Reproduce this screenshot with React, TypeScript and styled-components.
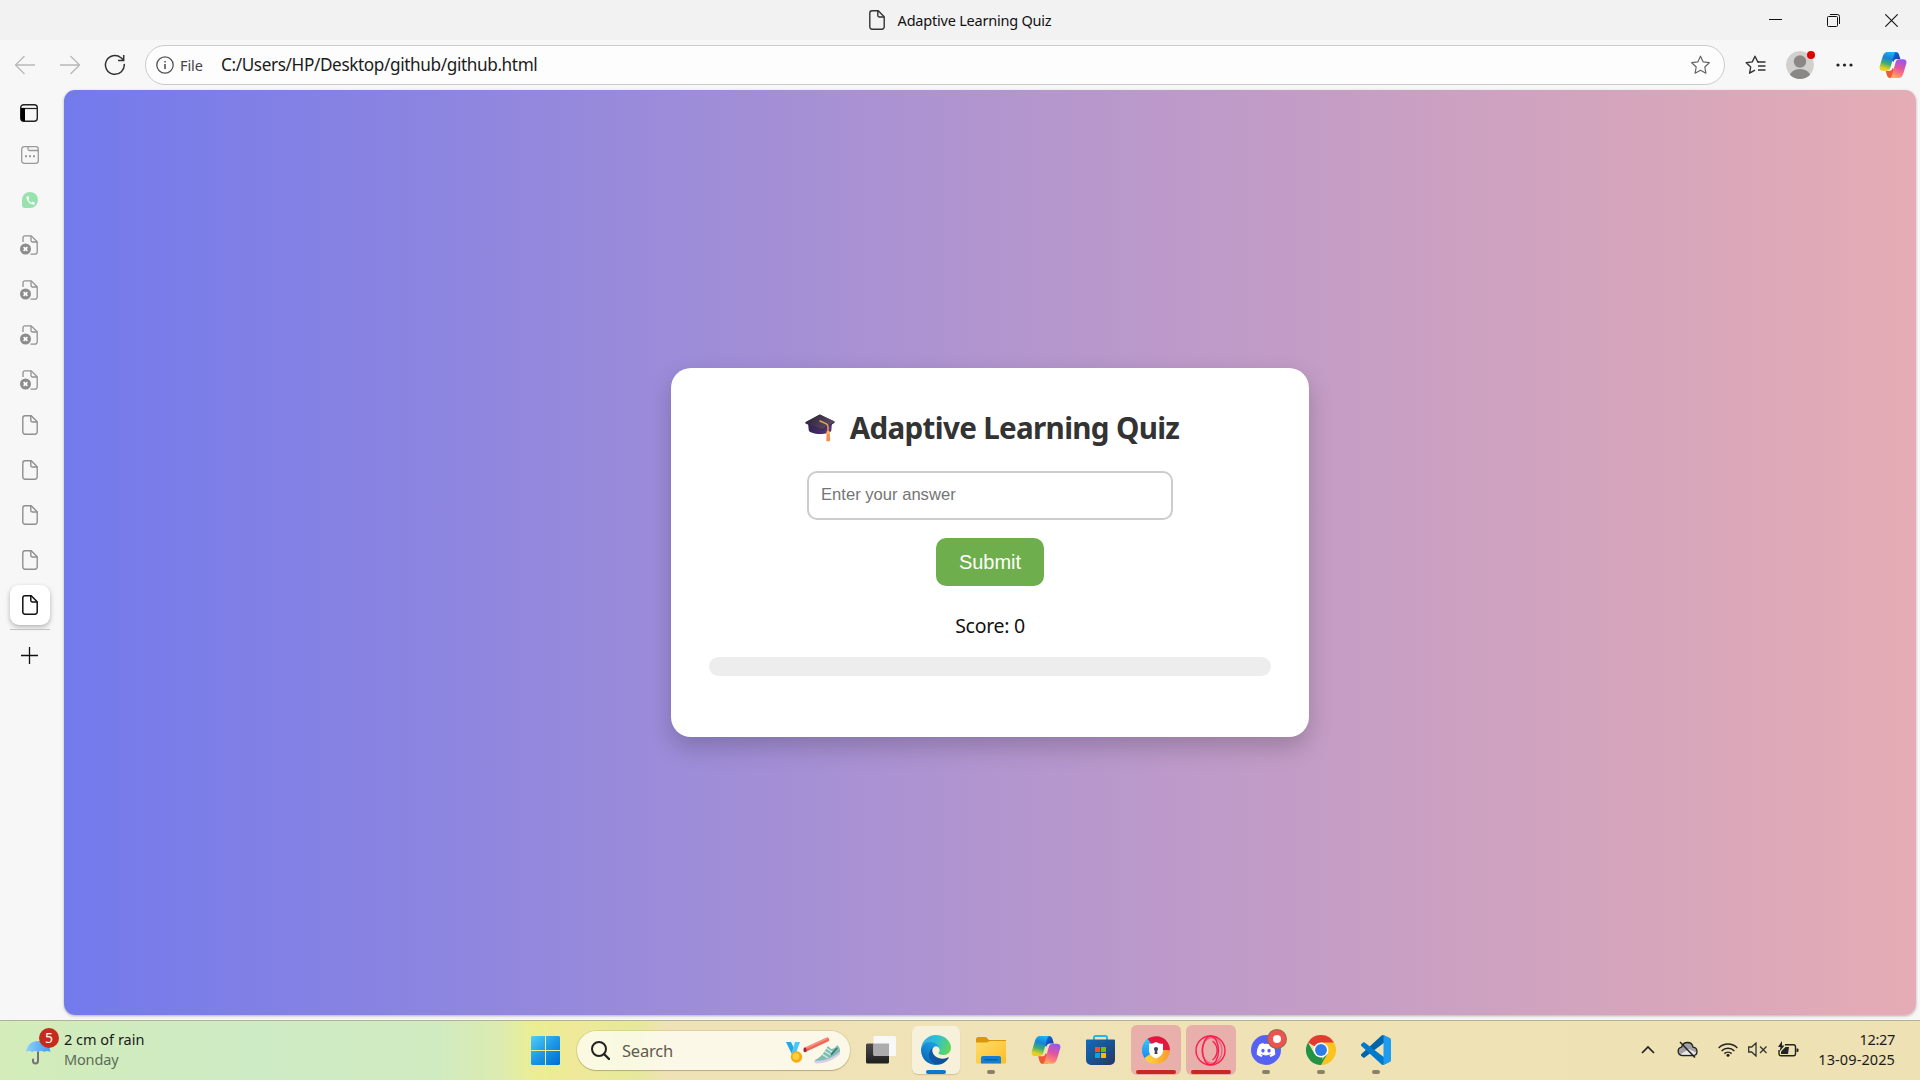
import React from "react";
import styled, { createGlobalStyle } from "styled-components";
import { FaDiscord } from "react-icons/fa";
import { MdCall } from "react-icons/md";

const ui = `"Noto Sans", "Open Sans", sans-serif`;

const GlobalStyle = createGlobalStyle`
  html, body { margin: 0; padding: 0; overflow: hidden; }
  * { box-sizing: border-box; }
  svg { display: block; flex: none; }
`;

const Screen = styled.div`
  width: 1920px;
  height: 1080px;
  display: flex;
  flex-direction: column;
  background: #f7f7f7;
  font-family: ${ui};
  overflow: hidden;
`;

const Label = styled.span<{ $size: number; $color?: string; $track?: number; $weight?: number; $line?: number }>`
  font-size: ${(p) => p.$size}px;
  color: ${(p) => p.$color ?? "#1b1b1b"};
  letter-spacing: ${(p) => p.$track ?? 0}px;
  font-weight: ${(p) => p.$weight ?? 400};
  line-height: ${(p) => p.$line ?? 20}px;
  white-space: nowrap;
`;

/* ---------- Title bar ---------- */

const TitleBar = styled.header`
  height: 40px;
  flex: none;
  background: #f2f2f2;
  display: grid;
  grid-template-columns: 1fr auto 1fr;
  align-items: center;
`;

const TabTitle = styled.div`
  display: flex;
  align-items: center;
  gap: 13px;
  grid-column: 2;
`;

const WindowControls = styled.div`
  display: flex;
  justify-content: flex-end;
`;

const WindowButton = styled.div`
  width: 58px;
  height: 40px;
  display: flex;
  align-items: center;
  justify-content: center;
`;

/* ---------- Toolbar ---------- */

const Toolbar = styled.nav`
  height: 50px;
  flex: none;
  display: flex;
  align-items: center;
  padding: 0 12px 0 14px;
`;

const NavButtons = styled.div`
  display: flex;
  align-items: center;
  gap: 24px;
  width: 131px;
`;

const AddressBar = styled.div`
  width: 1580px;
  height: 40px;
  border: 1px solid #cbcbcb;
  border-radius: 20px;
  background: #fdfdfd;
  display: flex;
  align-items: center;
  padding: 0 13px 0 10px;
`;

const SiteInfo = styled.div`
  display: flex;
  align-items: center;
  gap: 6px;
  width: 65px;
`;

const Url = styled.div`
  flex: 1;
  display: flex;
  padding-bottom: 1px;
`;

const ToolbarActions = styled.div`
  flex: 1;
  display: grid;
  grid-template-columns: 41px 50px 43px 28px;
  align-items: center;
  padding-left: 20px;
`;

/* ---------- Body ---------- */

const Body = styled.div`
  height: 930px;
  flex: none;
  display: flex;
`;

const SideTabs = styled.aside`
  width: 64px;
  flex: none;
  display: flex;
  flex-direction: column;
`;

const SideItem = styled.div<{ $h?: number; $shift?: number; $drop?: number }>`
  height: ${(p) => p.$h ?? 45}px;
  width: 60px;
  display: flex;
  align-items: center;
  justify-content: center;
  padding: ${(p) => p.$drop ?? 0}px ${(p) => p.$shift ?? 0}px 0 0;
`;

const ActiveTab = styled.div`
  width: 40px;
  height: 40px;
  border-radius: 9px;
  background: #fff;
  box-shadow: 0 2px 5px rgba(0, 0, 0, 0.28);
  display: flex;
  align-items: center;
  justify-content: center;
`;

const Divider = styled.div`
  width: 40px;
  height: 1px;
  margin: 2px 0 0 10px;
  background: #c4c4c4;
`;

const Page = styled.main`
  width: 1852px;
  height: 925px;
  border-radius: 11px;
  box-shadow: 0 1px 3px rgba(0, 0, 0, 0.28);
  background: linear-gradient(to right, #737aec 0%, #b295cf 50%, #e5acb4 100%);
  display: flex;
  align-items: center;
  justify-content: center;
`;

const Card = styled.section`
  width: 638px;
  height: 369px;
  border-radius: 20px;
  background: #fff;
  box-shadow: 0 10px 25px rgba(0, 0, 0, 0.2);
  padding: 38px;
  display: flex;
  flex-direction: column;
  align-items: center;
`;

const Heading = styled.h1`
  margin: 0;
  height: 44px;
  display: flex;
  align-items: center;
  gap: 15px;
  padding-left: 4px;
`;

const Answer = styled.input`
  width: 366px;
  height: 49px;
  margin-top: 21px;
  border: 2px solid #ccc;
  border-radius: 10px;
  padding: 0 12px 1px;
  outline: none;
  font: 16.6px "Liberation Sans", Arial, sans-serif;
  background: #fff;
  &::placeholder { color: #757575; opacity: 1; }
`;

const Submit = styled.button`
  width: 108px;
  height: 48px;
  margin-top: 18px;
  border: 0;
  border-radius: 10px;
  background: #6eae4c;
  color: #fff;
  padding: 0;
  font: 20px "Liberation Sans", Arial, sans-serif;
`;

const Score = styled.div`
  height: 30px;
  margin-top: 25px;
  display: flex;
  align-items: center;
`;

const Track = styled.div`
  width: 562px;
  height: 19px;
  margin-top: 16px;
  border-radius: 10px;
  background: #ededed;
`;

/* ---------- Taskbar ---------- */

const Taskbar = styled.footer`
  height: 60px;
  flex: none;
  border-top: 1px solid #b3b294;
  background: linear-gradient(to right, #d3ecb9 0, #cdebc5 260px, #d1ebc0 440px, #dcebb0 500px, #ebee92 535px, #efe999 575px, #e6e99b 635px, #f0e2b7 668px, #efe3b6 1300px, #eee1b4 1920px);
  display: flex;
`;

const Weather = styled.div`
  width: 517px;
  display: flex;
  padding: 7px 0 0 24px;
  gap: 4px;
`;

const Stack = styled.div<{ $end?: boolean; $top?: number }>`
  display: flex;
  flex-direction: column;
  align-items: ${(p) => (p.$end ? "flex-end" : "flex-start")};
  padding-top: ${(p) => p.$top ?? 0}px;
`;

const Apps = styled.div`
  display: flex;
  width: 1083px;
`;

const AppSlot = styled.div`
  width: 55px;
  height: 59px;
  display: flex;
  justify-content: center;
  padding-top: 4px;
`;

const AppTile = styled.div<{ $tone?: "active" | "alert" }>`
  width: ${(p) => (p.$tone === "alert" ? 50 : 48)}px;
  height: ${(p) => (p.$tone === "alert" ? 50 : 48)}px;
  margin-top: ${(p) => (p.$tone === "alert" ? 0 : 1)}px;
  border-radius: 6px;
  background: ${(p) => (p.$tone === "active" ? "#f7f1db" : p.$tone === "alert" ? "#e9afab" : "transparent")};
  box-shadow: ${(p) => (p.$tone === "active" ? "0 1px 1px rgba(90,80,40,.22)" : "none")};
  display: flex;
  flex-direction: column;
  align-items: center;
  justify-content: flex-end;
`;

const IconBox = styled.div`
  height: 34px;
  display: flex;
  align-items: center;
  justify-content: center;
`;

const Indicator = styled.div<{ $w: number; $c: string; $alert?: boolean }>`
  width: ${(p) => p.$w}px;
  height: 4px;
  margin: ${(p) => (p.$alert ? "3px 0 1px" : "3px 0 0")};
  border-radius: 2px;
  background: ${(p) => p.$c};
`;

const StartSlot = styled.div`
  width: 60px;
  display: flex;
  padding: 4px 0 0 4px;
  align-items: flex-start;
`;

const SearchBox = styled.div`
  width: 273px;
  height: 39px;
  margin: 10px 3px 0 0;
  border-radius: 20px;
  background: rgba(255, 255, 250, 0.74);
  box-shadow: 0 0 0 1px rgba(150, 140, 80, 0.2), 0 1px 1px rgba(90, 80, 40, 0.3);
  display: flex;
  align-items: center;
  padding: 0 8px 0 14px;
  gap: 12px;
`;

const SearchText = styled.div`
  flex: 1;
  display: flex;
`;

const Tray = styled.div`
  display: flex;
  align-items: flex-start;
  flex: 1;
  padding: 18px 25px 0 41px;
`;

const TrayIcons = styled.div`
  display: flex;
  height: 20px;
  align-items: center;
  flex: 1;
`;

const TrayIcon = styled.div<{ $gap: number }>`
  margin-right: ${(p) => p.$gap}px;
`;

const Clock = styled.div`
  margin-top: -10px;
`;

/* ---------- Drawings ---------- */

const DocIcon = ({ color = "#8f8f8f", width = 1.4 }: { color?: string; width?: number }) => (
  <svg width="16" height="20" viewBox="0 0 16 20" fill="none" stroke={color} strokeWidth={width}>
    <path d="M3 .8h6.2l6 6V17a2.2 2.2 0 0 1-2.2 2.2H3A2.2 2.2 0 0 1 .8 17V3A2.2 2.2 0 0 1 3 .8z" />
    <path d="M8.8 1v4.6c0 .9.5 1.4 1.4 1.4H15" />
  </svg>
);

const BrokenDocIcon = () => (
  <svg width="18" height="20" viewBox="0 0 18 20" fill="none" stroke="#929292" strokeWidth="1.3">
    <path d="M3 7V2.8A2 2 0 0 1 5 .8h6.2l6 6V17a2.2 2.2 0 0 1-2.2 2.2h-4.5" />
    <path d="M11 1v4.6c0 .9.5 1.4 1.4 1.4H17" />
    <circle cx="5.5" cy="14" r="5.5" fill="#8c8c8c" stroke="none" />
    <path d="M3.6 12.1l3.8 3.8m0-3.8l-3.8 3.8" stroke="#fff" strokeWidth="1.6" />
  </svg>
);

const CopilotIcon = ({ id, w = 29 }: { id: string; w?: number }) => (
  <svg width={w} height={w * 0.93} viewBox="0 0 28 26">
    <defs>
      <linearGradient id={`${id}a`} x1=".6" y1="0" x2=".35" y2="1">
        <stop offset="0" stopColor="#1bb4ee" /><stop offset=".32" stopColor="#1783d8" /><stop offset=".62" stopColor="#3fae70" /><stop offset=".9" stopColor="#e9cf1f" />
      </linearGradient>
      <linearGradient id={`${id}b`} x1=".65" y1="0" x2=".3" y2="1">
        <stop offset="0" stopColor="#9a55ee" /><stop offset=".45" stopColor="#e0569f" /><stop offset=".75" stopColor="#fb7b7b" /><stop offset="1" stopColor="#ffb35c" />
      </linearGradient>
      <linearGradient id={`${id}c`} x1="0" y1="0" x2="1" y2="1">
        <stop offset="0" stopColor="#1673dd" /><stop offset="1" stopColor="#1335a8" />
      </linearGradient>
    </defs>
    <path d="M12 0h4.6c2.2 0 3 1.200 3.600 3.200L21.300 7H18c-2.200 0-3 1-3.600 3L12 8z" fill={`url(#${id}c)`} />
    <path d="M16 26h-4.600c-2.200 0-3-1.200-3.600-3.200L6.700 19H10c2.200 0 3-1 3.600-3L16 18z" fill="#ee5a36" />
    <path d="M17 0H8.500C5.500 0 4.400 2.300 3.400 5.600L.9 13.800C-.2 17.100 1.200 18.700 3.900 18.700h3.900c2.400 0 3.100-1.300 3.800-3.600l3.100-10.800C15.300 2 15.800.2 17 0z" fill={`url(#${id}a)`} />
    <path d="M11 26h8.500c3 0 4.100-2.300 5.100-5.600l2.500-8.200c1.100-3.300-.3-4.900-3-4.900h-3.900c-2.400 0-3.100 1.300-3.800 3.600l-3.100 10.800c-.6 2.300-1.100 4.100-2.300 4.300z" fill={`url(#${id}b)`} />
  </svg>
);

const StarPath = "M10 1.200l2.700 5.700 6.100.8-4.500 4.300 1.100 6.200L10 15.200l-5.400 3 1.100-6.200L1.200 7.700l6.100-.8z";

const GradCap = () => (
  <svg width="30" height="28" viewBox="0 0 30 28">
    <defs>
      <linearGradient id="cap" x1="0" y1="0" x2="1" y2=".4"><stop offset="0" stopColor="#27222f" /><stop offset="1" stopColor="#5b4868" /></linearGradient>
      <linearGradient id="base" x1="0" y1="0" x2="1" y2="0"><stop offset="0" stopColor="#33234f" /><stop offset="1" stopColor="#5a3486" /></linearGradient>
    </defs>
    <path d="M3 9l.8 7.500c.3 1.500 5 3.500 11 3.500S26 18.500 26.300 16.500L27 9z" fill="url(#base)" />
    <path d="M14.800.4L29.600 7.500v1.200L17.500 16.500 .4 9.500V8.300z" fill="#3a2a4c" />
    <path d="M14.800.4L29.600 7.500 17.200 15.200.4 8.300z" fill="url(#cap)" />
    <path d="M15 7l6 2.600c1.600.8 2 1.600 2 3.200V19" fill="none" stroke="#e9a548" strokeWidth="1.500" strokeLinecap="round" />
    <path d="M21.700 18.500h3l.5 8c-.8 1.200-3.200 1.200-4 0z" fill="#f58d55" />
    <rect x="21.400" y="17" width="3.400" height="3" rx="1.200" fill="#ffb454" />
  </svg>
);

const Umbrella = () => (
  <svg width="36" height="38" viewBox="0 0 36 38">
    <defs><linearGradient id="umb" x1="0" y1="0" x2="1" y2="0"><stop offset="0" stopColor="#8fd0fb" /><stop offset="1" stopColor="#3f9bee" /></linearGradient></defs>
    <path d="M14 23v10a2.500 2.500 0 0 1-5 0v-1.500" fill="none" stroke="#77707c" strokeWidth="2" strokeLinecap="round" />
    <path d="M2 24C3 17 7 13.500 14 13s11.500 4 12.500 11c-2.200-1.400-4.300-1.400-6.200 0-2-1.400-4.200-1.400-6.200 0-2-1.400-4-1.400-6 0-2-1.400-4-1.400-6.100 0z" fill="url(#umb)" />
    <circle cx="25" cy="10" r="10" fill="#c42b1c" />
    <text x="25" y="15" textAnchor="middle" fontSize="14" fill="#fff" fontFamily="Noto Sans">5</text>
  </svg>
);

const WindowsLogo = () => (
  <svg width="29" height="29" viewBox="0 0 29 29">
    <defs><linearGradient id="win" gradientUnits="userSpaceOnUse" x1="0" y1="0" x2="26" y2="29"><stop offset="0" stopColor="#4fd0fb" /><stop offset=".5" stopColor="#1f9ae6" /><stop offset="1" stopColor="#0071d2" /></linearGradient></defs>
    <path fill="url(#win)" d="M1 0h13v14H0V1zM15 0h13l1 1v13H15zM0 15h14v14H1l-1-1zM15 15h14v13l-1 1H15z" />
  </svg>
);

const SearchArt = () => (
  <svg width="57" height="30" viewBox="0 0 57 30">
    <path d="M1 6h5l5 10-4 2.500z" fill="#25a6e8" /><path d="M15 6H10L6.500 17l4 1.500z" fill="#4cc7f5" />
    <circle cx="11.500" cy="21" r="5.700" fill="#f6ab14" /><circle cx="11" cy="20.500" r="3.400" fill="#ffcf3e" />
    <path d="M19 12L42 1.500c1.600-.5 3 2.500 1.500 3.700L21 15.800z" fill="#ee675a" />
    <path d="M19 12L42 1.500l.8 1.400L20 13.500z" fill="#fb8f7f" />
    <ellipse cx="20" cy="13.900" rx="1.600" ry="2.300" fill="#9c2635" />
    <path d="M30 24c5-2 9-7 13-14l3 3c2 0 5-1.500 6-4l2 2c2 4 1 7-2 9-6 4-13 6.500-20 7-2 0-3-1.500-2-3z" fill="#7fbdb1" />
    <path d="M30 24.500c8 1 17-2 25-9v2.500c-6 6-15 9.500-23 9.500-2.500 0-3-1.500-2-3z" fill="#d9cce9" />
    <path d="M37 18l6 4m-4-7l7 4m-5-7l6 4" stroke="#d5efe7" strokeWidth="1.300" />
    <path d="M46 19l6-7" stroke="#36766f" strokeWidth="1.600" />
  </svg>
);

const TaskView = () => (
  <svg width="30" height="28" viewBox="0 0 30 28">
    <defs><linearGradient id="tv" x1="0" y1="0" x2="0" y2="1"><stop offset="0" stopColor="#4a4a4a" /><stop offset="1" stopColor="#1e1e1e" /></linearGradient></defs>
    <rect x="0" y="7.500" width="23" height="20" rx="1.500" fill="url(#tv)" />
    <rect x="7.500" y="0" width="22.500" height="20" rx="1.500" fill="#f8f8f8" />
    <path d="M7.500 7.500H23V20H9a1.500 1.500 0 0 1-1.500-1.500z" fill="#acacac" />
  </svg>
);

const EdgeLogo = () => (
  <svg width="30" height="30" viewBox="0 0 256 256">
    <defs>
      <linearGradient id="e1" x1=".2" y1="0" x2="1" y2="0"><stop offset="0" stopColor="#0c59a4" /><stop offset="1" stopColor="#114a8b" /></linearGradient>
      <linearGradient id="e2" x1=".8" y1=".2" x2=".3" y2="1"><stop offset="0" stopColor="#1b9de2" /><stop offset=".5" stopColor="#1382d0" /><stop offset="1" stopColor="#0562ac" /></linearGradient>
      <linearGradient id="e3" x1="0" y1=".4" x2="1" y2=".7"><stop offset="0" stopColor="#35a9e8" /><stop offset=".45" stopColor="#2dc2cf" /><stop offset="1" stopColor="#66d84e" /></linearGradient>
    </defs>
    <path fill="url(#e1)" d="M231 190.500c-3.400 1.800-6.900 3.400-10.500 4.700a101.700 101.700 0 0 1-35.900 6.400c-47.300 0-88.500-32.500-88.500-74.300a31.500 31.500 0 0 1 16.400-27.300c-42.800 1.800-53.800 46.400-53.800 72.500 0 74 68.100 81.400 82.800 81.400 7.900 0 19.800-2.300 27-4.600l1.300-.4a128.300 128.300 0 0 0 66.600-52.800 4 4 0 0 0-5.400-5.600z" />
    <path fill="url(#e2)" d="M105.700 241.400a79.200 79.200 0 0 1-22.700-21.300 80.700 80.700 0 0 1 29.500-120c3.200-1.500 8.500-4.100 15.600-4a32.400 32.400 0 0 1 25.700 13 31.900 31.900 0 0 1 6.300 18.700c0-.2 24.500-79.600-80-79.600-43.900 0-80 41.600-80 78.200a130.200 130.200 0 0 0 12.100 56 128 128 0 0 0 156.400 67 75.500 75.500 0 0 1-62.800-8z" />
    <path fill="url(#e3)" d="M152.300 148.900c-.9 1-3.400 2.500-3.400 5.600 0 2.600 1.700 5.200 4.800 7.300 14.300 10 41.400 8.600 41.500 8.600a59.600 59.600 0 0 0 30.300-8.300 61.400 61.400 0 0 0 30.400-52.900c.3-22.400-8-37.300-11.300-43.900C223.500 23.900 177.700 0 128 0A128 128 0 0 0 0 126.200c.5-36.500 36.800-66 80-66 3.500 0 23.500.3 42 10.100 16.300 8.600 24.900 18.900 30.800 29.200 6.200 10.700 7.300 24.100 7.300 29.500s-2.700 13.300-7.800 19.900z" />
  </svg>
);

const FolderIcon = () => (
  <svg width="30" height="27" viewBox="0 0 30 27">
    <defs><linearGradient id="fo" x1="0" y1="0" x2="1" y2="1"><stop offset="0" stopColor="#ffdc6b" /><stop offset="1" stopColor="#fcbd25" /></linearGradient></defs>
    <path d="M1.500 0H10l3 3h17v5H0V1.500z" fill="#d9980c" />
    <path d="M0 5.500h11L14 4h16v21.500a1 1 0 0 1-1 1H1a1 1 0 0 1-1-1z" fill="url(#fo)" />
    <path d="M5 26.500V21a2 2 0 0 1 2-2h16a2 2 0 0 1 2 2v5.500z" fill="#1180d2" />
    <path d="M8.500 22.800h13" stroke="#0b559b" strokeWidth="1.200" />
  </svg>
);

const StoreIcon = () => (
  <svg width="29" height="30" viewBox="0 0 29 30">
    <defs><linearGradient id="st" x1="0" y1="0" x2="1" y2="1"><stop offset="0" stopColor="#0f6cbd" /><stop offset="1" stopColor="#263763" /></linearGradient></defs>
    <path d="M8 6V2.500A1.500 1.500 0 0 1 9.500 1h10A1.500 1.500 0 0 1 21 2.500V6" fill="none" stroke="#22b8ee" strokeWidth="2" />
    <path d="M0 5.500a1 1 0 0 1 1-1h27a1 1 0 0 1 1 1V25a5 5 0 0 1-5 5H5a5 5 0 0 1-5-5z" fill="url(#st)" />
    <path d="M9 12h5v5H9z" fill="#f25022" /><path d="M15 12h5v5h-5z" fill="#7fba00" />
    <path d="M9 18h5v5H9z" fill="#00a4ef" /><path d="M15 18h5v5h-5z" fill="#ffb900" />
  </svg>
);

const ShieldBrowser = () => (
  <svg width="28" height="28" viewBox="0 0 28 28">
    <defs>
      <linearGradient id="sb1" x1="0" y1="0" x2="0" y2="1"><stop offset="0" stopColor="#37c9fa" /><stop offset="1" stopColor="#1b88f1" /></linearGradient>
      <linearGradient id="sb2" x1="0" y1="0" x2="1" y2="0"><stop offset="0" stopColor="#ffd93a" /><stop offset="1" stopColor="#f79b2d" /></linearGradient>
    </defs>
    <path d="M14 14L3 22.700A14 14 0 0 1 6.500 2.100z" fill="url(#sb1)" />
    <path d="M14 14L5.500 2.800C12-1.500 23-1 27 9c.8 2 1 4 .9 6z" fill="#e3163f" />
    <path d="M14 14h13.800c.3 6-5 14-13.800 14-5 0-9-2.300-11.500-6z" fill="url(#sb2)" />
    <path d="M14 6c2.300 1.400 4.600 1.800 7 1.800v6.700c0 4-3.200 6.500-7 8-3.800-1.500-7-4-7-8V7.800c2.400 0 4.700-.4 7-1.800z" fill="#fff" />
    <circle cx="14" cy="13" r="2.100" fill="#3f4552" /><path d="M13 13.500h2l.5 4.500h-3z" fill="#3f4552" />
  </svg>
);

const OperaLogo = () => (
  <svg width="31" height="31" viewBox="0 0 31 31" fill="none" stroke="#fa1e4e" strokeWidth="1.400">
    <circle cx="15.500" cy="15.500" r="14.500" /><ellipse cx="15.500" cy="15.500" rx="8" ry="14.300" />
    <ellipse cx="17" cy="15.500" rx="10" ry="12.700" opacity=".5" />
    <path d="M17.500 6c6.200 5 6.200 14 0 19" />
  </svg>
);

const DiscordBubble = styled.div`
  width: 30px;
  height: 30px;
  border-radius: 50%;
  background: #5662f4;
  color: #fff;
  display: flex;
  align-items: center;
  justify-content: center;
  position: relative;
`;

const RecordBadge = styled.i`
  position: absolute;
  left: 17px;
  top: -5px;
  width: 18px;
  height: 18px;
  border-radius: 50%;
  border: 5px solid #ef5350;
  background: #fff;
  box-shadow: 0 0 0 1px #8f6a55;
`;

const ChromeLogo = () => (
  <svg width="30" height="30" viewBox="0 0 48 48">
    <path d="M24 24L3.200 12A24 24 0 0 1 44.800 12z" fill="#e33b2e" />
    <path d="M3.200 12l10.400 18L27 33l-3 15A24 24 0 0 1 3.200 12z" fill="#229342" />
    <path d="M34.400 30L24 48a24 24 0 0 0 20.800-36H24z" fill="#fcc31e" />
    <circle cx="24" cy="24" r="12" fill="#fff" /><circle cx="24" cy="24" r="9.500" fill="#2f7be9" />
    <path d="M34.400 30L24 48l-4-1 9-12z" fill="#229342" />
  </svg>
);

const CodeLogo = () => (
  <svg width="30" height="30" viewBox="0 0 100 100">
    <path fill="#0065a9" d="M96.460 10.800 75.860.880A6.230 6.230 0 0 0 68.750 2.080L1.300 63.600a4.170 4.170 0 0 0 0 6.160l5.500 5a4.170 4.170 0 0 0 5.330.24L93.360 13.400A4.130 4.130 0 0 1 100 16.670v-.24a6.250 6.250 0 0 0-3.540-5.630z" />
    <path fill="#007acc" d="M96.460 89.200 75.860 99.120a6.230 6.230 0 0 1-7.110-1.200L1.300 36.400a4.170 4.170 0 0 1 0-6.160l5.500-5a4.170 4.170 0 0 1 5.330-.24L93.360 86.600A4.130 4.130 0 0 0 100 83.330v.24a6.250 6.250 0 0 1-3.540 5.630z" />
    <path fill="#1f9cf0" d="M75.860 99.130a6.230 6.230 0 0 1-7.110-1.210A3.660 3.660 0 0 0 75 95.330V4.670a3.660 3.660 0 0 0-6.250-2.590A6.230 6.230 0 0 1 75.860.870l20.600 9.900A6.250 6.250 0 0 1 100 16.400v67.200a6.250 6.250 0 0 1-3.540 5.630z" />
  </svg>
);

const WhatsAppDot = styled.div`
  width: 16px;
  height: 16px;
  border-radius: 50% 50% 50% 15%;
  background: #98e2ae;
  color: #fff;
  display: flex;
  align-items: center;
  justify-content: center;
`;

type AppEntry = { icon: React.ReactNode; tone?: "active" | "alert"; bar?: "open" | "focus" };

const apps: AppEntry[] = [
  { icon: <TaskView /> },
  { icon: <EdgeLogo />, tone: "active", bar: "focus" },
  { icon: <FolderIcon />, bar: "open" },
  { icon: <CopilotIcon id="cpt" w={30} /> },
  { icon: <StoreIcon /> },
  { icon: <ShieldBrowser />, tone: "alert" },
  { icon: <OperaLogo />, tone: "alert" },
  { icon: <DiscordBubble><FaDiscord size={20} /><RecordBadge /></DiscordBubble>, bar: "open" },
  { icon: <ChromeLogo />, bar: "open" },
  { icon: <CodeLogo />, bar: "open" },
];

const TaskApp = ({ app }: { app: AppEntry }) => {
  const color = app.tone === "alert" ? "#c42b1c" : app.bar === "focus" ? "#0a79d4" : app.bar ? "#8a8268" : "transparent";
  const width = app.tone === "alert" ? 40 : app.bar === "focus" ? 20 : 8;
  return (
    <AppSlot>
      <AppTile $tone={app.tone}>
        <IconBox>{app.icon}</IconBox>
        <Indicator $w={width} $c={color} $alert={app.tone === "alert"} />
      </AppTile>
    </AppSlot>
  );
};

export default function App() {
  return (
    <Screen>
      <GlobalStyle />
      <TitleBar>
        <TabTitle>
          <DocIcon color="#333" />
          <Label $size={14.5} $track={-0.22} $color="#111">Adaptive Learning Quiz</Label>
        </TabTitle>
        <WindowControls>
          <WindowButton>
            <svg width="13" height="13"><path d="M0 5.500h13" stroke="#111" strokeWidth="1" /></svg>
          </WindowButton>
          <WindowButton>
            <svg width="13" height="13" fill="none" stroke="#111" strokeWidth="1">
              <rect x=".5" y="2.500" width="10" height="10" rx="1" /><path d="M3 .5h7.500a2 2 0 0 1 2 2V10" />
            </svg>
          </WindowButton>
          <WindowButton>
            <svg width="13" height="13"><path d="M.3.300l12.400 12.400M12.700.300L.3 12.700" stroke="#111" strokeWidth="1.100" /></svg>
          </WindowButton>
        </WindowControls>
      </TitleBar>

      <Toolbar>
        <NavButtons>
          <svg width="21" height="20" fill="none" stroke="#b9b9b9" strokeWidth="1.300"><path d="M21 10H1.500M10.500 1L1.500 10l9 9" /></svg>
          <svg width="21" height="20" fill="none" stroke="#b9b9b9" strokeWidth="1.300"><path d="M1 10h19.500M11.500 1l9 9-9 9" /></svg>
          <svg width="22" height="22" fill="none" stroke="#333" strokeWidth="1.500"><path d="M20.200 9.800A9.400 9.400 0 1 1 17 3.800L19.500 6M19.700 1v5.400H14" /></svg>
        </NavButtons>
        <AddressBar>
          <SiteInfo>
            <svg width="18" height="18" fill="none" stroke="#555" strokeWidth="1.300"><circle cx="9" cy="9" r="8.200" /><path d="M9 8v5M9 5v1.500" strokeWidth="1.600" /></svg>
            <Label $size={14.5} $track={-0.1} $color="#444">File</Label>
          </SiteInfo>
          <Url><Label $size={17.2} $track={-0.39}>C:/Users/HP/Desktop/github/github.html</Label></Url>
          <svg width="21" height="20" viewBox="0 0 20 20" fill="none" stroke="#666" strokeWidth="1.200" strokeLinejoin="round"><path d={StarPath} /></svg>
        </AddressBar>
        <ToolbarActions>
          <svg width="21" height="20" viewBox="0 0 21 20" fill="none" stroke="#333" strokeWidth="1.400" strokeLinejoin="round">
            <path d="M14 6.700h-1.300L10 1.200 7.300 6.900l-6.100.8 4.500 4.300-1.100 6.200 5.400-3" /><path d="M14 6.700h-1.500M12.500 7h8M13 11h7.500M13 15h7.500" />
          </svg>
          <svg width="30" height="30" viewBox="0 0 30 30">
            <clipPath id="av"><circle cx="14" cy="15" r="14" /></clipPath>
            <g clipPath="url(#av)"><circle cx="14" cy="15" r="14" fill="#d2d0ce" /><circle cx="14" cy="11.500" r="6.200" fill="#8a8886" /><ellipse cx="14" cy="27" rx="10.500" ry="8" fill="#8a8886" /></g>
            <circle cx="25" cy="5" r="4" fill="#e00000" />
          </svg>
          <svg width="17" height="4" fill="#222"><circle cx="2" cy="2" r="1.600" /><circle cx="8.500" cy="2" r="1.600" /><circle cx="15" cy="2" r="1.600" /></svg>
          <CopilotIcon id="cp" w={28} />
        </ToolbarActions>
      </Toolbar>

      <Body>
        <SideTabs>
          <SideItem $shift={2}>
            <svg width="18" height="18"><rect x=".7" y=".7" width="16.600" height="16.600" rx="3" fill="none" stroke="#222" strokeWidth="1.400" /><path d="M1 4.500h16" stroke="#222" strokeWidth="1.200" /><path d="M1 4h4v13H3a2 2 0 0 1-2-2z" fill="#000" /></svg>
          </SideItem>
          <SideItem $h={40}>
            <svg width="18" height="18" fill="none" stroke="#999" strokeWidth="1.300"><rect x=".7" y=".7" width="16.600" height="16.600" rx="2.500" /><path d="M7 1v2a1.500 1.500 0 0 0 1.500 1.500H17" /><path d="M4 10.300h2m2 0h2m2 0h2" strokeWidth="2" /></svg>
          </SideItem>
          <SideItem $h={47} $drop={3}><WhatsAppDot><MdCall size={11} /></WhatsAppDot></SideItem>
          {[0, 1, 2, 3].map((i) => <SideItem key={i} $shift={2}><BrokenDocIcon /></SideItem>)}
          {[0, 1, 2, 3].map((i) => <SideItem key={i}><DocIcon /></SideItem>)}
          <SideItem $drop={1}><ActiveTab><DocIcon color="#111" width={1.5} /></ActiveTab></SideItem>
          <Divider />
          <SideItem $h={50} $shift={1}>
            <svg width="17" height="17"><path d="M8.500 0v17M0 8.500h17" stroke="#111" strokeWidth="1.300" /></svg>
          </SideItem>
        </SideTabs>
        <Page>
          <Card>
            <Heading>
              <GradCap />
              <Label $size={29.6} $weight={700} $color="#333" $line={44} $track={-0.68}>Adaptive Learning Quiz</Label>
            </Heading>
            <Answer placeholder="Enter your answer" />
            <Submit>Submit</Submit>
            <Score><Label $size={19.5} $color="#111" $line={30} $track={-0.3}>Score: 0</Label></Score>
            <Track />
          </Card>
        </Page>
      </Body>

      <Taskbar>
        <Weather>
          <Umbrella />
          <Stack $top={1}>
            <Label $size={14.5} $track={0}>2 cm of rain</Label>
            <Label $size={14.5} $track={-0.15} $color="#5a6b58">Monday</Label>
          </Stack>
        </Weather>
        <Apps>
          <StartSlot><AppTile><IconBox><WindowsLogo /></IconBox><Indicator $w={8} $c="transparent" /></AppTile></StartSlot>
          <SearchBox>
            <svg width="19" height="19" fill="none" stroke="#222" strokeWidth="2"><circle cx="8" cy="8" r="7" /><path d="M13 13l5 5" strokeWidth="2.400" strokeLinecap="round" /></svg>
            <SearchText><Label $size={16.5} $track={-0.2} $color="#5e5c50">Search</Label></SearchText>
            <SearchArt />
          </SearchBox>
          {apps.map((app, i) => <TaskApp key={i} app={app} />)}
        </Apps>
        <Tray>
          <TrayIcons>
            <TrayIcon $gap={22}><svg width="14" height="9" fill="none" stroke="#222" strokeWidth="1.700"><path d="M1 8l6-6 6 6" /></svg></TrayIcon>
            <TrayIcon $gap={20}>
              <svg width="21" height="17" viewBox="0 0 21 17">
                <path d="M5 14.500a4.200 4.200 0 0 1-.5-8.300C5.500 3 8 1.500 10.500 1.500s5 1.500 5.500 4.700c2.500.3 4 2 4 4.300 0 2.500-1.700 4-4 4z" fill="#a3a1a6" stroke="#222" strokeWidth="1.300" />
                <path d="M4 13l8-5 7 3.500c-.5 1.500-1.500 2.300-3 2.300H5z" fill="#e8e6e6" /><path d="M3 1l15 15.500" stroke="#222" strokeWidth="1.500" />
              </svg>
            </TrayIcon>
            <TrayIcon $gap={10}>
              <svg width="20" height="15" fill="none" stroke="#222" strokeWidth="1.500"><path d="M.7 6a13 13 0 0 1 18.600 0M3.600 9a9 9 0 0 1 12.800 0M6.400 11.600a5.200 5.200 0 0 1 7.200 0" /><circle cx="10" cy="13.300" r="1.500" fill="#222" stroke="none" /></svg>
            </TrayIcon>
            <TrayIcon $gap={10}>
              <svg width="20" height="15" fill="none" stroke="#333" strokeWidth="1.300"><path d="M.7 5v5h3L8 14V1L3.700 5zM12 4.500l6.500 6.500m0-6.500L12 11" /></svg>
            </TrayIcon>
            <svg width="21" height="17" viewBox="0 0 21 17">
              <path d="M7 3.800h8.500a2 2 0 0 1 2 2v7a2 2 0 0 1-2 2H3a2 2 0 0 1-2-2V9" fill="none" stroke="#222" strokeWidth="1.400" />
              <path d="M3 13v-2.500l4.500-4.500H11l-1 7z" fill="#222" /><path d="M18.500 7.500h1a1 1 0 0 1 1 1V10a1 1 0 0 1-1 1h-1z" fill="#222" /><path d="M4 0L0 6h2.500L1.500 10.500 6.500 4.500H4z" fill="#222" />
            </svg>
          </TrayIcons>
          <Clock>
            <Stack $end>
              <Label $size={14.5} $track={-0.3}>12:27</Label>
              <Label $size={14.5} $track={0.1}>13-09-2025</Label>
            </Stack>
          </Clock>
        </Tray>
      </Taskbar>
    </Screen>
  );
}
